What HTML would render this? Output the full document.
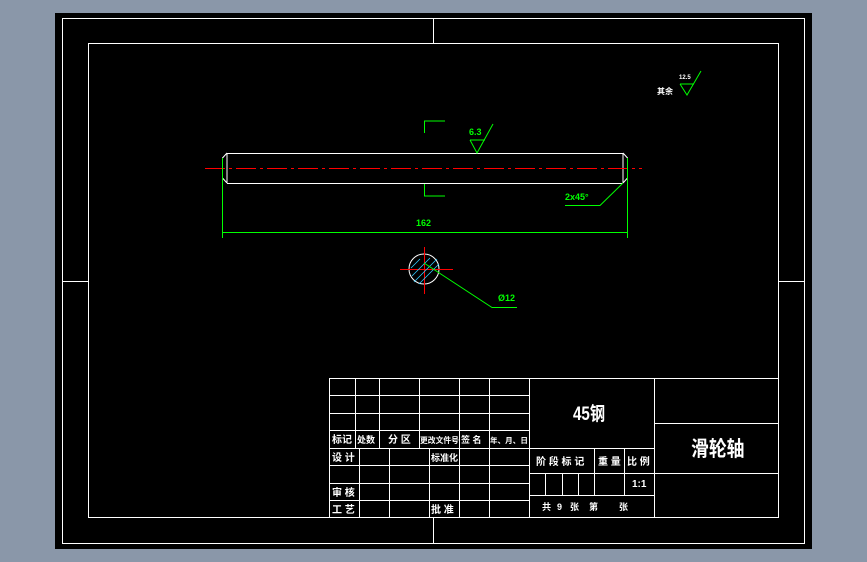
<!DOCTYPE html>
<html><head><meta charset="utf-8"><style>
html,body{margin:0;padding:0;background:#8a97a9;width:867px;height:562px;overflow:hidden}
svg{position:absolute;left:0;top:0}
text{font-family:"Liberation Sans","Noto Sans CJK SC",sans-serif;font-weight:bold}
</style></head><body>
<svg width="867" height="562" viewBox="0 0 867 562">
<rect x="55" y="13" width="757" height="536" fill="#000"/>
<g stroke="#fff" stroke-width="1" fill="none" shape-rendering="crispEdges">
<rect x="62.5" y="18.5" width="742" height="525"/>
<rect x="88.5" y="43.5" width="690" height="474"/>
<line x1="433.5" y1="18" x2="433.5" y2="43"/><line x1="433.5" y1="518" x2="433.5" y2="544"/>
<line x1="62" y1="281.5" x2="88" y2="281.5"/><line x1="779" y1="281.5" x2="805" y2="281.5"/>
<rect x="329.5" y="378.5" width="449" height="139"/>
<line x1="329" y1="395.5" x2="529" y2="395.5"/>
<line x1="329" y1="413.5" x2="529" y2="413.5"/>
<line x1="329" y1="430.5" x2="529" y2="430.5"/>
<line x1="329" y1="448.5" x2="654" y2="448.5"/>
<line x1="329" y1="465.5" x2="529" y2="465.5"/>
<line x1="329" y1="483.5" x2="529" y2="483.5"/>
<line x1="329" y1="500.5" x2="529" y2="500.5"/>
<line x1="355.5" y1="378" x2="355.5" y2="448"/>
<line x1="379.5" y1="378" x2="379.5" y2="448"/>
<line x1="419.5" y1="378" x2="419.5" y2="448"/>
<line x1="459.5" y1="378" x2="459.5" y2="518"/>
<line x1="489.5" y1="378" x2="489.5" y2="518"/>
<line x1="529.5" y1="378" x2="529.5" y2="518"/>
<line x1="359.5" y1="448" x2="359.5" y2="518"/>
<line x1="389.5" y1="448" x2="389.5" y2="518"/>
<line x1="429.5" y1="448" x2="429.5" y2="518"/>
<line x1="654.5" y1="378" x2="654.5" y2="518"/>
<line x1="529" y1="473.5" x2="779" y2="473.5"/>
<line x1="529" y1="495.5" x2="654" y2="495.5"/>
<line x1="654" y1="423.5" x2="779" y2="423.5"/>
<line x1="594.5" y1="448" x2="594.5" y2="495"/>
<line x1="624.5" y1="448" x2="624.5" y2="495"/>
<line x1="545.5" y1="473" x2="545.5" y2="495"/>
<line x1="562.5" y1="473" x2="562.5" y2="495"/>
<line x1="578.5" y1="473" x2="578.5" y2="495"/>
</g>
<g fill="#fff" font-size="10">
<text x="332" y="443">标记</text><text x="357" y="443" font-size="9">处数</text><text x="388" y="443">分 区</text>
<text x="420" y="443" font-size="7.8">更改文件号</text><text x="461" y="443" font-size="9">签 名</text><text x="490" y="443" font-size="7.6">年、月、日</text>
<text x="332" y="461">设 计</text><text x="431" y="461" font-size="9">标准化</text>
<text x="332" y="496">审 核</text><text x="332" y="513">工 艺</text><text x="431" y="513">批 准</text>
<text x="536" y="465">阶 段 标 记</text><text x="598" y="465">重 量</text><text x="627" y="465">比 例</text>
<text x="632" y="487">1:1</text>
<g font-size="9"><text x="542" y="510">共</text><text x="557" y="510">9</text><text x="570" y="510">张</text><text x="589" y="510">第</text><text x="619" y="510">张</text></g>
<text x="573" y="420" font-size="19" font-weight="normal" transform="translate(573 0) scale(0.8 1) translate(-573 0)">45钢</text>
<text x="691" y="456" font-size="21" font-weight="normal" transform="translate(691 0) scale(0.85 1) translate(-691 0)">滑轮轴</text>
<text x="657" y="94" font-size="8">其余</text>
</g>
<g stroke="#fff" fill="none">
<path d="M227 153.5H623M227 183.5H623M227 153V183M623 153V183M227 153L222.5 158V178L227 183M623 153L627.5 158V178L623 183"/>
<circle cx="424" cy="269" r="15"/>
</g>
<line x1="205" y1="168.5" x2="642" y2="168.5" stroke="#f00" stroke-dasharray="20,4,3,4"/>
<g stroke="#f00"><line x1="400" y1="269.5" x2="453" y2="269.5"/><line x1="424.5" y1="247" x2="424.5" y2="294"/></g>
<g stroke="#3cf" stroke-width="0.8"><path d="M412 276L430 258M414 282L437 259M419 284L439 264M411 268L420 259"/></g>
<g stroke="#0f0" fill="none">
<path d="M222.5 158V238M627.5 158V238M222 232.5H628"/>
<path d="M424.5 133V121H445M424.5 184V196H445"/>
<path d="M470 140H485M470 140L477 153L493 124"/>
<path d="M565 205.5H600L623 183"/>
<path d="M424 263L492 307.5H517"/>
<path d="M680 84H694M680 84L687 95L701 71"/>
</g>
<g fill="#0f0" font-size="9">
<text x="469" y="135">6.3</text><text x="416" y="226">162</text>
<text x="565" y="200">2x45°</text><text x="498" y="301">Ø12</text>
</g>
<text x="679" y="79" fill="#fff" font-size="6">12.5</text>
</svg>
</body></html>
